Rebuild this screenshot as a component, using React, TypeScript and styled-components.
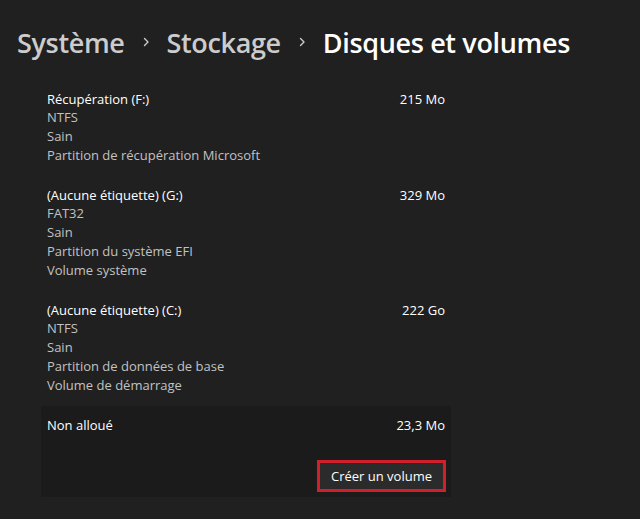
import React from "react";
import styled, { createGlobalStyle } from "styled-components";

const Global = createGlobalStyle`
  html, body { margin: 0; padding: 0; background: #202020; }
  body { font-family: "Open Sans", "Noto Sans", sans-serif; -webkit-font-smoothing: antialiased; }
`;

const Page = styled.div`
  width: 640px;
  height: 519px;
  background: #202020;
  overflow: hidden;
  box-sizing: border-box;
  padding: 23px 0 0 17px;
`;

const Breadcrumb = styled.h1`
  margin: 0;
  display: flex;
  align-items: center;
  gap: 15px;
  height: 38px;
  font-size: 27px;
  font-weight: 600;
  letter-spacing: -0.35px;
  white-space: nowrap;
`;

const Crumb = styled.span<{ $current?: boolean }>`
  color: ${(p) => (p.$current ? "#ffffff" : "#cccccc")};
`;

const Chevron = styled.svg`
  width: 12px;
  height: 12px;
  flex: none;
`;

const List = styled.div`
  width: 410px;
  margin: 28px 0 0 24px;
  display: flex;
  flex-direction: column;
`;

const Volumes = styled.div`
  display: flex;
  flex-direction: column;
  gap: 20px;
`;

const Group = styled.div`
  display: flex;
  flex-direction: column;
  padding: 0 6px;
`;

const Panel = styled.div`
  display: flex;
  flex-direction: column;
  margin-top: 11px;
  padding: 9px 6px 5px;
  background: #1b1b1b;
`;

const Row = styled.div`
  display: flex;
  justify-content: space-between;
  align-items: center;
  height: 19px;
  font-size: 13px;
  color: #ffffff;
`;

const Sub = styled.div`
  height: 19px;
  line-height: 19px;
  font-size: 13px;
  color: #c2c2c2;
`;

const Actions = styled.div`
  display: flex;
  justify-content: flex-end;
  margin-top: 26px;
`;

const Button = styled.button`
  height: 32px;
  width: 129px;
  box-sizing: border-box;
  border: 3px solid #d11f2b;
  background: #2b2b2b;
  color: #ffffff;
  font-family: "Open Sans", "Noto Sans", sans-serif;
  font-size: 13px;
  padding: 0;
  margin-right: -1px;
`;

const Arrow = () => (
  <Chevron viewBox="0 0 12 12">
    <path d="M4.5 2.5 L8 6 L4.5 9.5" fill="none" stroke="#cccccc" strokeWidth="1.4" strokeLinecap="round" strokeLinejoin="round" />
  </Chevron>
);

type Vol = { title: string; size: string; lines: string[] };

const vols: Vol[] = [
  { title: "Récupération (F:)", size: "215 Mo", lines: ["NTFS", "Sain", "Partition de récupération Microsoft"] },
  { title: "(Aucune étiquette) (G:)", size: "329 Mo", lines: ["FAT32", "Sain", "Partition du système EFI", "Volume système"] },
  { title: "(Aucune étiquette) (C:)", size: "222 Go", lines: ["NTFS", "Sain", "Partition de données de base", "Volume de démarrage"] },
];

export default function App() {
  return (
    <Page>
      <Global />
      <Breadcrumb>
        <Crumb>Système</Crumb>
        <Arrow />
        <Crumb>Stockage</Crumb>
        <Arrow />
        <Crumb $current>Disques et volumes</Crumb>
      </Breadcrumb>
      <List>
        <Volumes>
          {vols.map((v) => (
            <Group key={v.title}>
              <Row>
                <span>{v.title}</span>
                <span>{v.size}</span>
              </Row>
              {v.lines.map((l) => (
                <Sub key={l}>{l}</Sub>
              ))}
            </Group>
          ))}
        </Volumes>
        <Panel>
          <Row>
            <span>Non alloué</span>
            <span>23,3 Mo</span>
          </Row>
          <Actions>
            <Button>Créer un volume</Button>
          </Actions>
        </Panel>
      </List>
    </Page>
  );
}
